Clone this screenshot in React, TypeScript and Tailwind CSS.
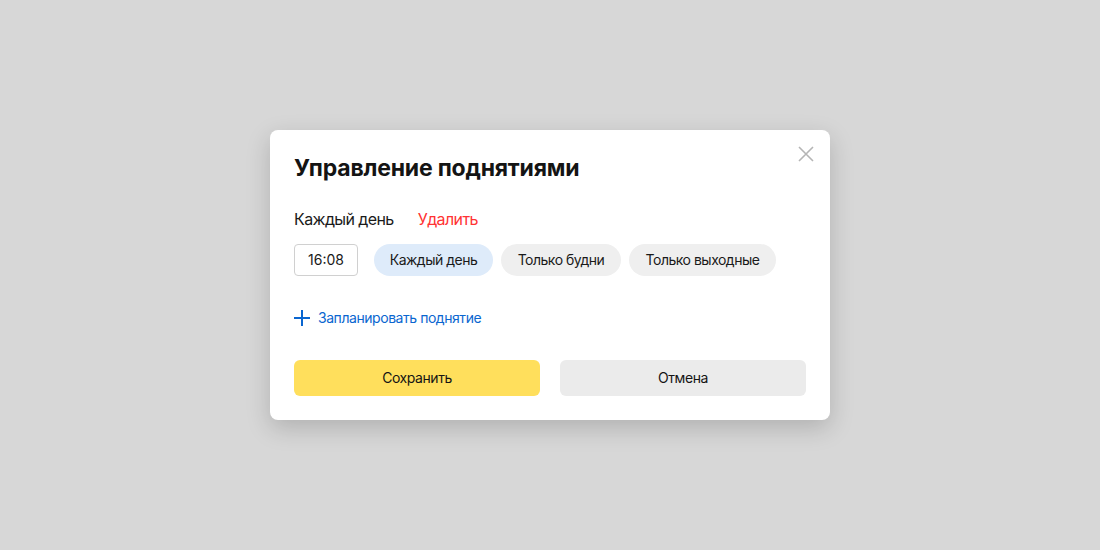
import React from "react";

export default function App() {
  return (
    <div
      className="w-[1100px] h-[550px] bg-[#d7d7d7] flex items-center justify-center"
      style={{ fontFamily: "Inter, 'Noto Sans', sans-serif" }}
    >
      <div className="relative w-[560px] h-[290px] bg-white rounded-[8px] shadow-[0_8px_24px_rgba(0,0,0,0.18)] px-6 pt-6 pb-6 flex flex-col">
        <button className="absolute right-[16px] top-[16px] w-[16px] h-[16px] text-[#b5b5b5]">
          <svg width="16" height="16" viewBox="0 0 16 16" fill="none" stroke="currentColor" strokeWidth="1.6">
            <path d="M1 1L15 15M15 1L1 15" />
          </svg>
        </button>
        <h1 className="text-[23px] leading-[28px] font-bold text-[#141414] tracking-[-0.2px]">
          Управление поднятиями
        </h1>
        <div className="mt-[25px] flex items-center gap-6 text-[16px] leading-[24px] tracking-[-0.6px]">
          <span className="text-[#1a1a1a]">Каждый день</span>
          <span className="text-[#ff3333]">Удалить</span>
        </div>
        <div className="mt-[13px] flex items-center h-[32px] text-[14px] text-[#1a1a1a]">
          <div className="w-[64px] h-[32px] border border-[#d0d0d0] rounded-[4px] flex items-center justify-center pb-[1px]">
            16:08
          </div>
          <div className="ml-4 flex gap-2 tracking-[-0.5px]">
            <div className="h-[32px] w-[119px] rounded-full bg-[#deebfa] flex items-center justify-center pb-[2px]">Каждый день</div>
            <div className="h-[32px] w-[120px] rounded-full bg-[#efefef] flex items-center justify-center pb-[2px]">Только будни</div>
            <div className="h-[32px] w-[147px] rounded-full bg-[#efefef] flex items-center justify-center pb-[2px]">Только выходные</div>
          </div>
        </div>
        <div className="mt-[31px] flex items-center gap-2 h-[20px] text-[14px] text-[#0a66d0] tracking-[-0.45px]">
          <svg width="16" height="16" viewBox="0 0 16 16" stroke="#0a66d0" strokeWidth="2" className="mt-[1px]">
            <path d="M8 0V16M0 8H16" />
          </svg>
          <span>Запланировать поднятие</span>
        </div>
        <div className="mt-[33px] flex gap-5 text-[14px] text-[#141414] tracking-[-0.45px]">
          <button className="flex-1 h-[36px] rounded-[6px] bg-[#ffdf5c] pb-[2px]">Сохранить</button>
          <button className="flex-1 h-[36px] rounded-[6px] bg-[#ebebeb] pb-[2px]">Отмена</button>
        </div>
      </div>
    </div>
  );
}
